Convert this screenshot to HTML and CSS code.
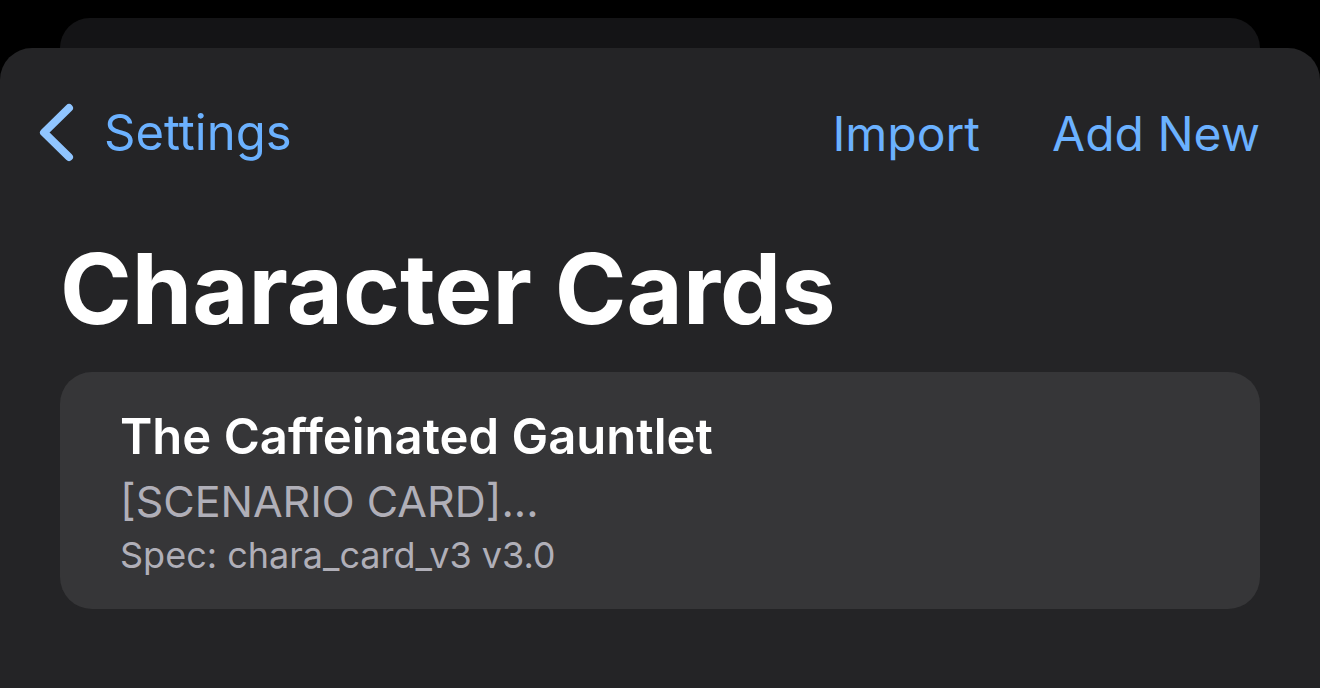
FILE: index.html
```html
<!DOCTYPE html>
<html lang="en">
<head>
<meta charset="utf-8">
<meta name="viewport" content="width=device-width, initial-scale=1">
<title>Character Cards</title>
<link rel="stylesheet" href="styles.css">
</head>
<body>
<div class="backdrop-sheet"></div>
<main class="sheet">
  <nav class="toolbar">
    <a class="back" href="#settings">
      <svg class="chevron" viewBox="0 0 38 60" aria-hidden="true"><path d="M33 5 8 29.500 33 54"/></svg>
      <span>Settings</span>
    </a>
    <div class="actions">
      <button type="button">Import</button>
      <button type="button">Add New</button>
    </div>
  </nav>
  <h1 class="title">Character Cards</h1>
  <a class="card" href="#card">
    <span class="card-name">The Caffeinated Gauntlet</span>
    <span class="card-summary">[SCENARIO CARD]...</span>
    <span class="card-spec">Spec: chara_card_v3 v3.0</span>
  </a>
</main>
</body>
</html>
```
FILE: styles.css
```css
* {
  box-sizing: border-box;
}

body {
  margin: 0;
  min-height: 100vh;
  display: flex;
  flex-direction: column;
  padding-top: 18px;
  background: #000;
  color: #fff;
  font-family: Inter, "Liberation Sans", sans-serif;
}

.backdrop-sheet {
  height: 30px;
  margin: 0 60px;
  border-radius: 30px 30px 0 0;
  background: #141416;
}

.sheet {
  flex: 1;
  padding: 52px 60px 60px;
  border-radius: 32px 32px 0 0;
  background: #242426;
}

.toolbar {
  display: flex;
  align-items: center;
  justify-content: space-between;
  margin-left: -24px;
  color: #6bb1ff;
  line-height: 64px;
}

.back {
  display: flex;
  align-items: center;
  gap: 30px;
  color: inherit;
  font-size: 49px;
  text-decoration: none;
}

.chevron {
  width: 38px;
  height: 60px;
  fill: none;
  stroke: #90c5ff;
  stroke-width: 8;
  stroke-linecap: round;
  stroke-linejoin: round;
}

.actions {
  display: flex;
  gap: 72px;
  padding-top: 2px;
  font-size: 48px;
}

.actions button {
  padding: 0;
  border: 0;
  background: none;
  color: inherit;
  font: inherit;
}

.title {
  margin: 65px 0 25px;
  font-size: 97px;
  font-weight: 700;
  line-height: 116px;
}

.card {
  display: flex;
  flex-direction: column;
  padding: 32px 60px;
  border-radius: 32px;
  background: #363638;
  color: #b0afb8;
  text-decoration: none;
}

.card-name {
  color: #fff;
  font-size: 49px;
  font-weight: 600;
  line-height: 65px;
}

.card-summary {
  font-size: 43px;
  line-height: 64px;
}

.card-spec {
  font-size: 36px;
  line-height: 44px;
}
```
